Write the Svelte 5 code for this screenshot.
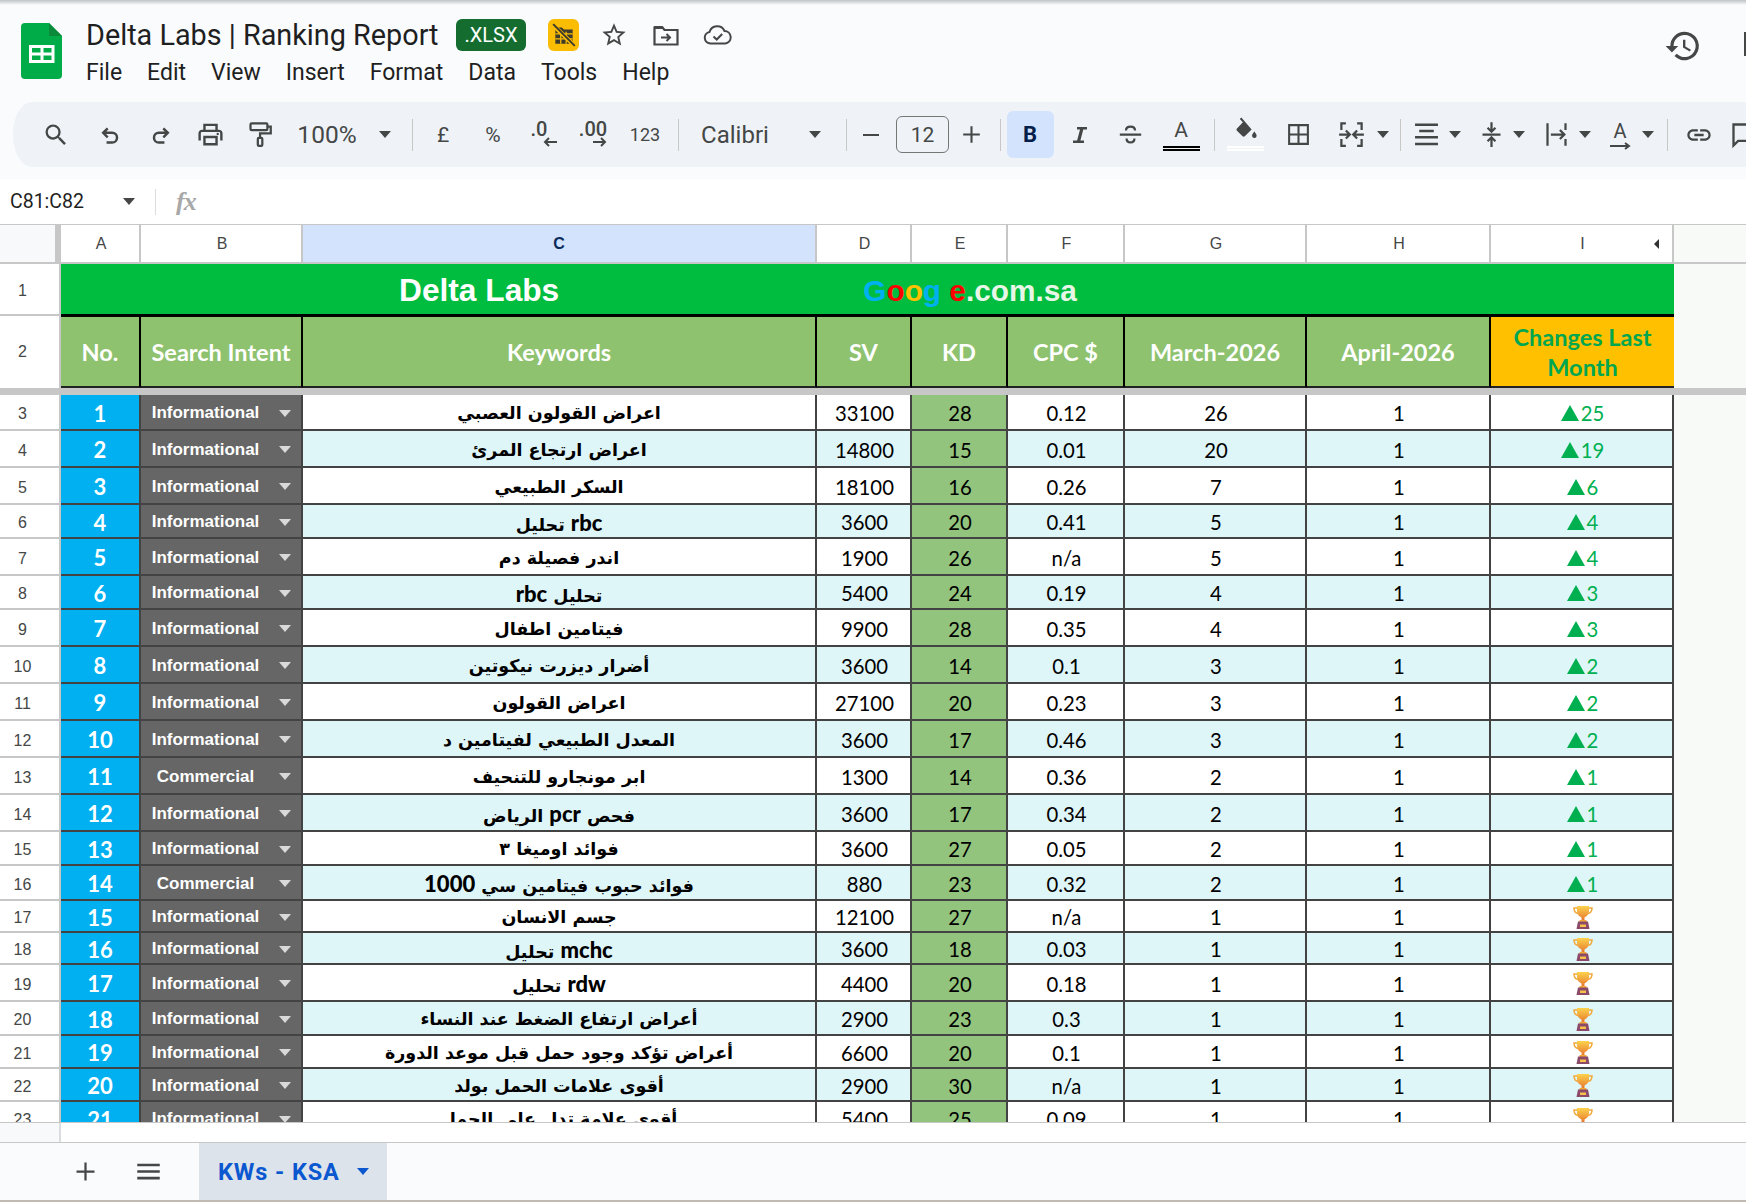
<script>
  const menu = ['File', 'Edit', 'View', 'Insert', 'Format', 'Data', 'Tools', 'Help'];

  const columns = ['A', 'B', 'C', 'D', 'E', 'F', 'G', 'H', 'I'];

  // icon bodies for the toolbar, all on a 24 box
  const icons = {
    search: '<path fill="currentColor" d="M15.5 14h-.79l-.28-.27A6.471 6.471 0 0 0 16 9.5 6.5 6.5 0 1 0 9.5 16c1.61 0 3.09-.59 4.23-1.57l.27.28v.79l5 4.99L20.49 19l-4.99-5zm-6 0C7.01 14 5 11.99 5 9.5S7.01 5 9.5 5 14 7.01 14 9.5 11.99 14 9.5 14z"/>',
    undo: '<path fill="none" stroke="currentColor" stroke-width="2.200" d="M9.5 6.5 5.5 10.500l4 4M5.500 10.500h8a4.300 4.300 0 0 1 0 8.600H8.500"/>',
    redo: '<path fill="none" stroke="currentColor" stroke-width="2.200" d="M14.500 6.500l4 4-4 4M18.500 10.500h-8a4.300 4.300 0 0 0 0 8.600h5"/>',
    print: '<path fill="currentColor" d="M19 8h-1V3H6v5H5c-1.660 0-3 1.340-3 3v6h4v4h12v-4h4v-6c0-1.660-1.340-3-3-3zM8 5h8v3H8V5zm8 14H8v-4h8v4zm2-2v-4H6v4H4v-6c0-.550.450-1 1-1h14c.550 0 1 .450 1 1v6h-2z"/><circle fill="currentColor" cx="18" cy="11.500" r="1"/>',
    paint: '<g fill="none" stroke="currentColor" stroke-width="2"><rect x="4" y="2" width="15" height="6" rx="1"/><path d="M19 5h3v6h-9.500v4"/><rect x="10.500" y="15" width="4" height="7" rx="1"/></g>',
    minus: '<path fill="currentColor" d="M4 11h16v2H4z"/>',
    plus: '<path fill="currentColor" d="M11 4h2v7h7v2h-7v7h-2v-7H4v-2h7z"/>',
    italic: '<path fill="currentColor" d="M9 4h10v2.500h-3.700L12.400 17.500H16V20H5v-2.500h4.100L12 6.500H9z"/>',
    strike: '<g fill="none" stroke="currentColor" stroke-width="2"><path d="M8 8.500C8 6 9.800 5 12 5s4 1 4 3.500"/><path d="M2.500 12h19"/><path d="M8.500 15.500c0 2.500 1.500 3.500 3.500 3.500s3.500-1 3.500-3.500"/></g>',
    fill: '<path fill="currentColor" d="M8 0.500l-1.500 1.500 3 3-5.700 6c-.600.600-.600 1.500 0 2.100l5.400 5.400c.600.600 1.500.600 2.100 0l6.600-6.600z"/><path fill="currentColor" d="M20.500 14s-2.200 2.500-2.200 4a2.200 2.200 0 0 0 4.400 0c0-1.500-2.200-4-2.200-4z"/>',
    borders: '<path fill="currentColor" d="M2 2v20h20V2H2zm9 18H4v-7h7v7zm0-9H4V4h7v7zm9 9h-7v-7h7v7zm0-9h-7V4h7v7z"/>',
    merge: '<g fill="none" stroke="currentColor" stroke-width="2"><path d="M7 2H3v6M17 2h4v6M7 22H3v-6M17 22h4v-6"/><path d="M1 12h9M7 8.500l3.500 3.500L7 15.500M23 12h-9M17 8.500 13.500 12l3.500 3.500"/></g>',
    align: '<path fill="currentColor" d="M1 1.500h22v2.400H1zM5 7.500h14v2.400H5zM1 13.500h22v2.400H1zM1 20h22v2.400H1z"/>',
    valign: '<g fill="none" stroke="currentColor" stroke-width="2"><path d="M4 12h16"/><path d="M12 1v8M8.500 6 12 9.500 15.500 6M12 23v-8M8.500 18 12 14.500 15.500 18"/></g>',
    wrap: '<g fill="none" stroke="currentColor" stroke-width="2"><path d="M4 2v20M20 2v6M20 16v6"/><path d="M7 12h12M15 8l4 4-4 4"/></g>',
    link: '<path fill="currentColor" d="M3.900 12c0-1.710 1.390-3.100 3.100-3.100h4V7H7c-2.760 0-5 2.240-5 5s2.240 5 5 5h4v-1.900H7c-1.710 0-3.100-1.390-3.100-3.100zM8 13h8v-2H8v2zm9-6h-4v1.900h4c1.710 0 3.100 1.390 3.100 3.100s-1.390 3.100-3.100 3.100h-4V17h4c2.760 0 5-2.240 5-5s-2.240-5-5-5z"/>',
    comment: '<path fill="none" stroke="currentColor" stroke-width="2" d="M3 3h18v14H7l-4 4z"/>'
  };

  // x is the centre of the item in the toolbar
  const toolDefs = [
    { x: 56, w: 28, icon: 'search' },
    { x: 110, w: 27, icon: 'undo' },
    { x: 160, w: 27, icon: 'redo' },
    { x: 210, w: 29, icon: 'print' },
    { x: 259, w: 27, icon: 'paint' },
    { x: 327, w: 66, text: '100%', cls: 'zoomtext' },
    { x: 385, w: 14, caret: true },
    { x: 412.5, w: 1, sep: true },
    { x: 443, w: 22, text: '£', cls: 'fmt' },
    { x: 493, w: 26, text: '%', cls: 'fmt' },
    { x: 539, w: 34, deci: '.0', dir: 'left' },
    { x: 593, w: 40, deci: '.00', dir: 'right' },
    { x: 645, w: 36, text: '123', cls: 'num123' },
    { x: 678, w: 1, sep: true },
    { x: 735, w: 74, text: 'Calibri', cls: 'fontname' },
    { x: 815, w: 14, caret: true },
    { x: 846, w: 1, sep: true },
    { x: 871, w: 24, icon: 'minus' },
    { x: 922.5, w: 53, text: '12', cls: 'sizebox' },
    { x: 971, w: 25, icon: 'plus' },
    { x: 1000, w: 1, sep: true },
    { x: 1030, w: 47, text: 'B', cls: 'boldbtn' },
    { x: 1080, w: 24, icon: 'italic' },
    { x: 1130, w: 27, icon: 'strike' },
    { x: 1181, w: 38, colorA: true },
    { x: 1214, w: 1, sep: true },
    { x: 1245, w: 38, fillA: true },
    { x: 1298, w: 25, icon: 'borders' },
    { x: 1351, w: 27, icon: 'merge' },
    { x: 1383, w: 14, caret: true },
    { x: 1400, w: 1, sep: true },
    { x: 1426, w: 25, icon: 'align' },
    { x: 1455, w: 14, caret: true },
    { x: 1491, w: 27, icon: 'valign' },
    { x: 1519, w: 14, caret: true },
    { x: 1556, w: 27, icon: 'wrap' },
    { x: 1585, w: 14, caret: true },
    { x: 1620, w: 27, rotate: true },
    { x: 1648, w: 14, caret: true },
    { x: 1667.5, w: 1, sep: true },
    { x: 1699, w: 28, icon: 'link' },
    { x: 1744, w: 28, icon: 'comment' }
  ];

  // the gap in front of each item follows from the centres above
  let right = 13;
  const tools = toolDefs.map((t) => {
    const gap = t.x - t.w / 2 - right;
    right = t.x + t.w / 2;
    return { ...t, gap };
  });

  const headers = ['No.', 'Search Intent', 'Keywords', 'SV', 'KD', 'CPC $', 'March-2026', 'April-2026'];

  const I = 'Informational';
  const C = 'Commercial';

  // h is the row height on screen, borders included
  const rows = [
    [36, I, 'اعراض القولون العصبي', 33100, 28, '0.12', 26, 25],
    [37, I, 'اعراض ارتجاع المرئ', 14800, 15, '0.01', 20, 19],
    [37, I, 'السكر الطبيعي', 18100, 16, '0.26', 7, 6],
    [34, I, 'rbc تحليل', 3600, 20, '0.41', 5, 4],
    [37, I, 'اندر فصيلة دم', 1900, 26, 'n/a', 5, 4],
    [34, I, 'تحليل rbc', 5400, 24, '0.19', 4, 3],
    [37, I, 'فيتامين اطفال', 9900, 28, '0.35', 4, 3],
    [37, I, 'أضرار ديزرت نيكوتين', 3600, 14, '0.1', 3, 2],
    [37, I, 'اعراض القولون', 27100, 20, '0.23', 3, 2],
    [37, I, 'المعدل الطبيعي لفيتامين د', 3600, 17, '0.46', 3, 2],
    [37, C, 'ابر مونجارو للتنحيف', 1300, 14, '0.36', 2, 1],
    [37, I, 'فحص pcr الرياض', 3600, 17, '0.34', 2, 1],
    [34, I, 'فوائد اوميغا ٣', 3600, 27, '0.05', 2, 1],
    [35, C, 'فوائد حبوب فيتامين سي 1000', 880, 23, '0.32', 2, 1],
    [32, I, 'جسم الانسان', 12100, 27, 'n/a', 1, 0],
    [32, I, 'mchc تحليل', 3600, 18, '0.03', 1, 0],
    [37, I, 'rdw تحليل', 4400, 20, '0.18', 1, 0],
    [34, I, 'أعراض ارتفاع الضغط عند النساء', 2900, 23, '0.3', 1, 0],
    [33, I, 'أعراض تؤكد وجود حمل قبل موعد الدورة', 6600, 20, '0.1', 1, 0],
    [33, I, 'أقوى علامات الحمل بولد', 2900, 30, 'n/a', 1, 0],
    [34, I, 'أقوى علامة تدل على الحمل', 5400, 25, '0.09', 1, 0]
  ];

  // latin words and digits sit larger than the arabic around them
  const parts = (text) => text.split(/([A-Za-z0-9]+)/).filter(Boolean);
  const isLatin = (part) => /^[A-Za-z0-9]+$/.test(part);
</script>

<div class="page">
  <div class="topshadow"></div>

  <header class="titlebar">
    <svg class="logo" viewBox="0 0 41 56">
      <path fill="#00ac47" d="M4 0h24l13 13v39a4 4 0 0 1-4 4H4a4 4 0 0 1-4-4V4a4 4 0 0 1 4-4z" />
      <path fill="#0a8a3a" d="M28 0l13 13H28z" />
      <path fill="#fff" d="M8 22h25.500v18H8zm3 3v4.500h8.500V25zm11.500 0v4.500H30.500V25zM11 32.500V37h8.500v-4.500zm11.500 0V37H30.500v-4.500z" />
    </svg>
    <div class="titlecol">
      <div class="titleline">
        <span class="doctitle">Delta Labs | Ranking Report</span>
        <span class="xlsx">.XLSX</span>
        <span class="yellow">
          <svg viewBox="0 0 24 24" width="26" height="26">
            <path fill="#3c3a2a" d="M4 5h6l2 2h8v13H4z" />
            <path stroke="#fbbc04" stroke-width="1.200" d="M4 11h16M4 15.500h16M9 9v11M14 9v11" />
            <path stroke="#fbbc04" stroke-width="4" d="M2 3 22 22" />
            <path stroke="#3c3a2a" stroke-width="1.800" d="M2 2 22 22" />
          </svg>
        </span>
        <svg class="star" viewBox="0 0 24 24">
          <path fill="#444746" d="M22 9.240l-7.190-.62L12 2 9.190 8.630 2 9.240l5.460 4.730L5.820 21 12 17.270 18.180 21l-1.630-7.030L22 9.240zM12 15.400l-3.760 2.270 1-4.280-3.320-2.880 4.380-.38L12 6.100l1.710 4.040 4.380.38-3.320 2.880 1 4.280L12 15.400z" />
        </svg>
        <svg class="folder" viewBox="0 0 26 21">
          <path fill="none" stroke="#444746" stroke-width="2.200" d="M1.500 2.500h8l2 2.500h13v14.500h-23z" />
          <path fill="#444746" d="M1 1h8.500l2 3H1z" />
          <path fill="none" stroke="#444746" stroke-width="2" d="M8 12.500h9M13.500 9l3.500 3.500-3.500 3.500" />
        </svg>
        <svg class="cloud" viewBox="0 0 30 20">
          <path fill="none" stroke="#444746" stroke-width="2" d="M7.500 18.500a5.800 5.800 0 0 1-1-11.500A8 8 0 0 1 21.500 6a6.300 6.300 0 0 1 1 12.500z" />
          <path fill="none" stroke="#444746" stroke-width="2" d="M10.500 11.500l3.200 3 5.500-5.500" />
        </svg>
      </div>
      <nav class="menu">
        {#each menu as item}
          <span>{item}</span>
        {/each}
      </nav>
    </div>
    <svg class="history" viewBox="0 0 24 24">
      <path fill="#444746" d="M13 3a9 9 0 0 0-9 9H1l3.890 3.890.07.140L9 12H6a7 7 0 1 1 2.050 4.950l-1.420 1.420A9 9 0 1 0 13 3zm-1 5v5l4.280 2.540.720-1.210-3.500-2.080V8H12z" />
    </svg>
    <div class="edgeicon"></div>
  </header>

  <div class="toolwrap">
    <div class="toolbar">
      {#each tools as t}
        <div class="tool {t.cls ?? ''}" class:sep={t.sep} style="margin-left:{t.gap}px;width:{t.w}px">
          {#if t.icon}
            <svg viewBox="0 0 24 24" width={t.w} height={t.w}>{@html icons[t.icon]}</svg>
          {:else if t.text}
            {t.text}
          {:else if t.caret}
            <i class="caret"></i>
          {:else if t.deci}
            <span class="deci {t.dir}">
              <span>{t.deci}</span>
              <svg viewBox="0 0 16 10" width="16" height="10">
                {#if t.dir === 'left'}
                  <path fill="none" stroke="currentColor" stroke-width="2" d="M15 5H3M7 1 3 5l4 4" />
                {:else}
                  <path fill="none" stroke="currentColor" stroke-width="2" d="M1 5h12M9 1l4 4-4 4" />
                {/if}
              </svg>
            </span>
          {:else if t.colorA}
            <span class="colora">
              <span>A</span>
              <i></i>
            </span>
          {:else if t.fillA}
            <span class="filla">
              <svg viewBox="0 0 24 24" width="25" height="25">{@html icons.fill}</svg>
              <i></i>
            </span>
          {:else if t.rotate}
            <span class="rotate">
              <span>A</span>
              <svg viewBox="0 0 22 8" width="22" height="8"><path fill="none" stroke="currentColor" stroke-width="2" d="M1 4h19M16 1l4 3-4 3" /></svg>
            </span>
          {/if}
        </div>
      {/each}
    </div>
  </div>

  <div class="formula">
    <span class="namebox">C81:C82</span>
    <i class="caret"></i>
    <span class="fsep"></span>
    <span class="fx">fx</span>
  </div>

  <div class="sheet">
    <div class="row colhead">
      <div class="corner"></div>
      {#each columns as col}
        <div class="collabel" class:selected={col === 'C'}>
          {col}
          {#if col === 'I'}<i class="leftarrow"></i>{/if}
        </div>
      {/each}
    </div>

    <div class="banner">
      <div class="rowhead">1</div>
      <div class="bannerbody">
        <span class="brand">Delta Labs</span>
        <span class="domain"><b class="c1">G</b><b class="c2">o</b><b class="c3">o</b><b class="c1">g</b><b class="c4">l</b><b class="c2">e</b>.com.sa</span>
      </div>
    </div>

    <div class="row heading">
      <div class="rowhead">2</div>
      {#each headers as title}
        <div class="hcell">{title}</div>
      {/each}
      <div class="hcell changes">Changes Last<br />Month</div>
    </div>

    <div class="freeze"></div>

    {#each rows as [h, intent, keyword, sv, kd, cpc, march, change], i}
      <div class="row data" class:alt={i % 2 === 1} style="height:{h}px">
        <div class="rowhead">{i + 3}</div>
        <div class="cell no">{i + 1}</div>
        <div class="cell intent"><span>{intent}</span><i class="caret light"></i></div>
        <div class="cell keyword" dir="rtl">
          <span>{#each parts(keyword) as part}{#if isLatin(part)}<span class="latin">{part}</span>{:else}{part}{/if}{/each}</span>
        </div>
        <div class="cell">{sv}</div>
        <div class="cell kd">{kd}</div>
        <div class="cell">{cpc}</div>
        <div class="cell">{march}</div>
        <div class="cell">1</div>
        <div class="cell change">
          {#if change}
            <i class="up"></i><span>{change}</span>
          {:else}
            <svg class="trophy" viewBox="0 0 20 23">
              <defs>
                <linearGradient id="cup" x1="0" y1="0" x2="0" y2="1">
                  <stop offset="0" stop-color="#fcd34d" />
                  <stop offset="1" stop-color="#e8792e" />
                </linearGradient>
              </defs>
              <path fill="none" stroke="#f2a93b" stroke-width="1.500" d="M4.500 2H1c0 3.500 1.500 5 4 5.500M15.500 2H19c0 3.500-1.500 5-4 5.500" />
              <path fill="url(#cup)" d="M4 0h12v5c0 3.500-2.500 5.500-4.500 6.500V14h-3v-2.500C6.500 10.500 4 8.500 4 5z" />
              <path fill="#f2a93b" d="M6.500 14h7v2h-7z" />
              <path fill="#8a4a68" d="M3.500 23l1.500-7.500h10l1.500 7.500z" />
              <path fill="#f6c04a" d="M7 18.500h6v2.500H7z" />
            </svg>
          {/if}
        </div>
      </div>
    {/each}
  </div>

  <div class="gridfoot"><div class="footgutter"></div></div>

  <footer class="tabs">
    <svg class="tabicon add" viewBox="0 0 24 24"><path fill="#444746" d="M11 4h2v7h7v2h-7v7h-2v-7H4v-2h7z" /></svg>
    <svg class="tabicon all" viewBox="0 0 24 24"><path fill="#444746" d="M2 5h20v2.400H2zM2 10.800h20v2.400H2zM2 16.600h20V19H2z" /></svg>
    <div class="tab"><span>KWs - KSA</span><i class="caret blue"></i></div>
  </footer>
</div>

<style>
  :global(body) {
    margin: 0;
    background: #fff;
  }

  .page {
    width: 1746px;
    height: 1202px;
    overflow: hidden;
    display: flex;
    flex-direction: column;
    font-family: Roboto, 'Liberation Sans', sans-serif;
    color: #1f1f1f;
  }

  i {
    display: block;
    font-style: normal;
  }

  .topshadow {
    height: 5px;
    background: linear-gradient(#bfc3c6, #f9fbfd);
  }

  .titlebar {
    height: 97px;
    background: #f9fbfd;
    display: flex;
    align-items: flex-start;
    padding-left: 21px;
  }

  .logo {
    width: 41px;
    height: 56px;
    margin-top: 18px;
  }

  .titlecol {
    margin-left: 24px;
    margin-top: 13px;
    display: flex;
    flex-direction: column;
    gap: 7px;
  }

  .titleline {
    display: flex;
    align-items: center;
    height: 34px;
  }

  .doctitle {
    font-size: 28.800px;
    width: 370px;
    color: #1f1f1f;
    white-space: nowrap;
  }

  .xlsx {
    width: 70px;
    height: 32px;
    border-radius: 6px;
    background: #146c2e;
    color: #fff;
    font-size: 20px;
    display: flex;
    align-items: center;
    justify-content: center;
  }

  .yellow {
    width: 31px;
    height: 32px;
    margin-left: 22px;
    border-radius: 6px;
    background: #fbbc04;
    display: flex;
    align-items: center;
    justify-content: center;
  }

  .star {
    width: 28px;
    height: 28px;
    margin-left: 21px;
  }

  .folder {
    width: 26px;
    height: 21px;
    margin-left: 25px;
  }

  .cloud {
    width: 30px;
    height: 20px;
    margin-left: 24px;
  }

  .menu {
    display: flex;
    font-size: 23px;
    color: #1f1f1f;
    gap: 25px;
  }

  .history {
    width: 38px;
    height: 38px;
    margin-left: auto;
    margin-top: 22px;
    margin-right: 42px;
  }

  .edgeicon {
    width: 2px;
    height: 24px;
    margin-top: 27px;
    background: #444746;
  }

  .toolwrap {
    height: 77px;
    background: #f9fbfd;
    padding-left: 13px;
  }

  .toolbar {
    height: 65px;
    background: #eff3f8;
    border-radius: 32px 0 0 32px;
    display: flex;
    align-items: center;
    color: #444746;
    white-space: nowrap;
    margin-left: -13px;
    padding-left: 13px;
    background-clip: content-box;
    overflow: hidden;
  }

  .tool {
    flex: none;
    display: flex;
    align-items: center;
    justify-content: center;
    color: #444746;
  }

  .tool.sep {
    height: 32px;
    background: #c7c7c7;
  }

  .zoomtext {
    font-size: 24.500px;
  }

  .fmt {
    font-size: 21px;
  }

  .num123 {
    font-size: 18px;
  }

  .fontname {
    font-size: 24px;
  }

  .sizebox {
    height: 37px;
    box-sizing: border-box;
    border: 1px solid #747775;
    border-radius: 6px;
    font-size: 21px;
  }

  .boldbtn {
    height: 47px;
    background: #d3e3fd;
    border-radius: 6px;
    color: #041e49;
    font-weight: 700;
    font-size: 22px;
  }

  .deci {
    display: flex;
    flex-direction: column;
    align-items: center;
    font-size: 20px;
    font-weight: 500;
    line-height: 15px;
  }

  .deci.left svg {
    margin-left: 22px;
  }

  .deci.right svg {
    margin-left: 13px;
  }

  .colora {
    display: flex;
    flex-direction: column;
    align-items: center;
    font-size: 21px;
    line-height: 26px;
    margin-top: -2px;
  }

  .colora i {
    width: 37px;
    height: 5px;
    box-sizing: border-box;
    border-top: 2px solid #000;
    border-bottom: 2px solid #000;
    margin-top: 3px;
  }

  .filla {
    display: flex;
    flex-direction: column;
    align-items: center;
    margin-top: -2px;
  }

  .filla i {
    width: 37px;
    height: 5px;
    box-sizing: border-box;
    border-top: 2px solid #fff;
    border-bottom: 2px solid #fff;
    margin-top: 4px;
  }

  .rotate {
    display: flex;
    flex-direction: column;
    align-items: center;
    font-size: 20px;
    line-height: 22px;
  }

  .caret {
    width: 0;
    height: 0;
    border-left: 6.500px solid transparent;
    border-right: 6.500px solid transparent;
    border-top: 7px solid #444746;
  }

  .caret.light {
    border-left-width: 6px;
    border-right-width: 6px;
    border-top-color: #d9d9d9;
  }

  .caret.blue {
    border-top-color: #0b57d0;
  }

  .formula {
    height: 45px;
    background: #fff;
    display: flex;
    align-items: center;
    padding-left: 10px;
    box-sizing: border-box;
  }

  .namebox {
    width: 113px;
    font-size: 19.500px;
    color: #1f1f1f;
  }

  .fsep {
    width: 1px;
    height: 26px;
    background: #dadce0;
    margin-left: 20px;
  }

  .fx {
    margin-left: 20px;
    font-family: 'Liberation Serif', serif;
    font-style: italic;
    font-weight: 700;
    font-size: 26px;
    color: #a8a8a8;
    letter-spacing: -1px;
  }

  .sheet {
    height: 898px;
    overflow: hidden;
    background: #f8faf7;
    border-top: 1px solid #c7c7c7;
    box-sizing: border-box;
    display: flex;
    flex-direction: column;
    flex: none;
  }

  .row {
    display: grid;
    grid-template-columns: 61px 80px 162px 514px 95px 96px 117px 182px 184px 183px;
    flex: none;
  }

  .colhead {
    height: 39px;
    font-family: 'Liberation Sans', sans-serif;
    font-size: 16px;
    color: #444746;
    border-bottom: 2px solid #c7c7c7;
    box-sizing: border-box;
  }

  .corner {
    background: #f8f9fa;
    border-right: 6px solid #c7c7c7;
  }

  .collabel {
    position: relative;
    background: #fff;
    border-right: 2px solid #c7c7c7;
    display: flex;
    align-items: center;
    justify-content: center;
    padding-left: 2px;
  }

  .collabel.selected {
    background: #d3e3fd;
    color: #0b2a5c;
    font-weight: 700;
    padding-left: 0;
  }

  .leftarrow {
    position: absolute;
    right: 13px;
    top: 14px;
    width: 0;
    height: 0;
    border-top: 5px solid transparent;
    border-bottom: 5px solid transparent;
    border-right: 5px solid #333;
  }

  .rowhead {
    background: #fff;
    border-right: 2px solid #c7c7c7;
    display: flex;
    align-items: center;
    justify-content: center;
    font-family: 'Liberation Sans', sans-serif;
    font-size: 16px;
    color: #444746;
    box-sizing: border-box;
    padding-right: 14px;
    padding-top: 4px;
  }

  .banner {
    height: 50px;
    display: flex;
    flex: none;
  }

  .banner .rowhead {
    width: 61px;
    padding-top: 3px;
  }

  .bannerbody {
    width: 1613px;
    background: #00bd3f;
    display: flex;
    align-items: center;
    font-family: 'Liberation Sans', sans-serif;
    font-weight: 700;
    color: #fff;
    white-space: nowrap;
  }

  .brand {
    margin-left: 338px;
    font-size: 31.700px;
    margin-top: 3px;
  }

  .domain {
    margin-left: 304px;
    font-size: 29.800px;
    color: #e7f6e6;
    margin-top: 3px;
  }

  .c1 {
    color: #00b0f0;
  }
  .c2 {
    color: #ff0000;
  }
  .c3 {
    color: #ffc000;
  }
  .c4 {
    color: #00bd3f;
  }

  .heading {
    height: 74px;
    font-family: Lato, 'Liberation Sans', sans-serif;
  }

  .heading .rowhead {
    border-top: 2px solid #c7c7c7;
    padding-bottom: 0;
    padding-top: 0;
  }

  .hcell {
    background: #8ec26f;
    color: #fff;
    font-weight: 700;
    font-size: 23.500px;
    display: flex;
    align-items: center;
    justify-content: center;
    text-align: center;
    border-top: 3px solid #000;
    border-bottom: 2px solid #222;
    border-right: 2px solid #000;
    line-height: 30px;
    white-space: nowrap;
  }

  .hcell.changes {
    background: #ffc000;
    color: #00a650;
    border-right: 0;
  }

  .freeze {
    height: 7px;
    flex: none;
    background: #c7c7c7;
  }

  .data {
    font-family: Lato, 'Liberation Sans', sans-serif;
  }

  .data .rowhead {
    border-bottom: 2px solid #c7c7c7;
  }

  .cell {
    background: #fff;
    color: #000;
    font-size: 20.300px;
    display: flex;
    align-items: center;
    justify-content: center;
    border-right: 2px solid #434343;
    border-bottom: 2px solid #434343;
    overflow: hidden;
    white-space: nowrap;
    min-width: 0;
    padding-left: 2px;
    padding-top: 2px;
  }

  .alt .cell {
    background: #dff6f9;
  }

  .cell.no {
    background: #00b0f0;
    color: #fff;
    font-weight: 700;
    font-size: 22px;
    padding-left: 0;
  }

  .cell.intent {
    background: #666;
    color: #fff;
    font-family: 'Liberation Sans', sans-serif;
    font-weight: 700;
    font-size: 17px;
    padding-left: 0;
    padding-right: 10px;
  }

  .cell.intent span {
    flex: 1;
    text-align: center;
    padding-right: 9px;
  }

  .cell.kd {
    background: #93c47d;
  }

  .cell.keyword {
    font-family: 'DejaVu Sans', sans-serif;
    font-weight: 700;
    font-size: 17.500px;
    padding-left: 0;
  }

  .latin {
    font-family: Lato, sans-serif;
    font-weight: 900;
    font-size: 22px;
  }

  .cell.change {
    color: #00b050;
    gap: 2px;
  }

  .up {
    width: 0;
    height: 0;
    border-left: 9px solid transparent;
    border-right: 9px solid transparent;
    border-bottom: 16px solid #00b050;
  }

  .trophy {
    width: 20px;
    height: 23px;
  }

  .gridfoot {
    height: 20px;
    flex: none;
    background: #fff;
    border-top: 1px solid #c7c7c7;
    box-sizing: border-box;
  }

  .footgutter {
    width: 61px;
    height: 100%;
    box-sizing: border-box;
    background: #f8f9fa;
    border-right: 2px solid #dadce0;
  }

  .tabs {
    height: 60px;
    flex: none;
    box-sizing: border-box;
    background: #f9fbfd;
    border-top: 1px solid #c7c7c7;
    border-bottom: 2px solid #c0bab2;
    display: flex;
    align-items: stretch;
  }

  .tabicon {
    width: 27px;
    height: 27px;
    align-self: center;
  }

  .add {
    margin-left: 72px;
  }

  .all {
    margin-left: 36px;
  }

  .tab {
    width: 188px;
    margin-left: 37px;
    background: #dde3ea;
    display: flex;
    align-items: center;
    color: #0b57d0;
    font-weight: 700;
    font-size: 23.500px;
    letter-spacing: 0.900px;
    box-sizing: border-box;
    padding-left: 19px;
    gap: 17px;
  }
</style>
